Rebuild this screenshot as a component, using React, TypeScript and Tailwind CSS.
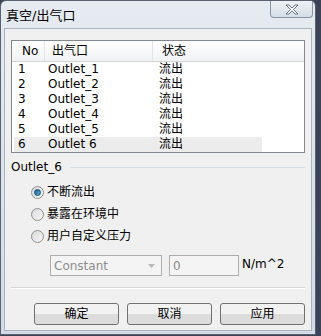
import React from 'react';

const rows = [1, 2, 3, 4, 5, 6].map((n) => ({ no: n, name: `Outlet_${n}`, state: '流出' }));

const font = { fontFamily: '"DejaVu Sans", "Noto Sans CJK SC", sans-serif' };

function Radio({ checked, label }: { checked?: boolean; label: string }) {
  return (
    <div className="flex items-center h-[22px] pl-[20px]">
      <div className="w-[13px] h-[13px] rounded-full border border-[#8e8f8f] bg-gradient-to-br from-[#d9d9d9] to-[#f7f7f7] flex items-center justify-center">
        {checked && (
          <div className="w-[7px] h-[7px] rounded-full bg-gradient-to-br from-[#1c5f8c] to-[#5fb2e0] border border-[#134a70]" />
        )}
      </div>
      <span className="ml-[3px] text-[12px] text-black">{label}</span>
    </div>
  );
}

function Button({ children }: { children: React.ReactNode }) {
  return (
    <button className="w-[86px] h-[22px] rounded-[3px] border border-[#707070] bg-gradient-to-b from-[#f2f2f2] from-50% to-[#dcdcdc] to-50% text-[12px] text-black">
      {children}
    </button>
  );
}

export default function App() {
  return (
    <div className="w-[321px] h-[336px] bg-[#3c4257] overflow-hidden" style={font}>
      <div className="w-[316px] h-[335px] border border-[#5a6270] rounded-t-[6px] bg-gradient-to-b from-[#e6ebf1] to-[#d2dbe6] flex flex-col">
        {/* title bar */}
        <div className="h-[27px] flex items-start justify-between relative">
          <span className="ml-[5px] mt-[5px] text-[13px] text-black">真空/出气口</span>
          <div className="mr-[2px] w-[43px] h-[17px] border border-t-0 border-[#8a96a5] rounded-b-[4px] bg-gradient-to-b from-[#eef2f6] to-[#d5dde7] flex items-center justify-center">
            <svg width="14" height="11" viewBox="0 0 14 11">
              <path d="M1 1 L4 1 L7 4 L10 1 L13 1 L8.5 5.5 L13 10 L10 10 L7 7 L4 10 L1 10 L5.5 5.5 Z" fill="#f4f6f8" stroke="#6d7682" strokeWidth="1" />
            </svg>
          </div>
        </div>

        {/* client */}
        <div className="flex-1 mx-[3px] mb-[3px] bg-[#f0f0f0] border border-[#a9b2bd] px-[6px] pt-[11px]">
          {/* list */}
          <div className="h-[113px] border border-[#828790] bg-white overflow-hidden">
            <div className="h-[21px] flex items-center text-[12px] border-b border-[#d5d5d5] bg-gradient-to-b from-white to-[#f1f2f4]">
              <div className="w-[33px] pl-[10px] border-r border-[#e3e4e6] h-full flex items-center">No</div>
              <div className="w-[108px] pl-[7px] border-r border-[#e3e4e6] h-full flex items-center">出气口</div>
              <div className="flex-1 pl-[9px]">状态</div>
            </div>
            {rows.map((r) => (
              <div
                key={r.no}
                className={`h-[15px] flex items-center text-[12px] leading-[15px] ml-[2px] w-[248px] ${r.no === 6 ? 'bg-[#ececec]' : ''}`}
              >
                <div className="w-[31px] pl-[4px]">{r.no}</div>
                <div className="w-[108px] pl-[3px]">{r.no === 6 ? 'Outlet 6' : r.name}</div>
                <div className="flex-1 pl-[6px]">{r.state}</div>
              </div>
            ))}
          </div>

          {/* group */}
          <div className="mt-[7px] flex items-center h-[14px]">
            <span className="text-[12px] text-black">Outlet_6</span>
            <div className="flex-1 ml-[8px] h-px bg-[#d5dfe5]" />
          </div>
          <div className="mt-[7px] flex flex-col">
            <Radio checked label="不断流出" />
            <Radio label="暴露在环境中" />
            <Radio label="用户自定义压力" />
          </div>

          <div className="mt-[8px] ml-[39px] flex items-center">
            <div className="w-[112px] h-[21px] border border-[#adadad] bg-[#f4f4f4] flex items-center justify-between pl-[3px] pr-[6px]">
              <span className="text-[12px] text-[#8d8d8d]">Constant</span>
              <svg width="7" height="4" viewBox="0 0 7 4">
                <path d="M0 0 L7 0 L3.5 4 Z" fill="#b8b8b8" />
              </svg>
            </div>
            <div className="ml-[7px] w-[70px] h-[21px] border border-[#adadad] bg-[#f4f4f4] flex items-center pl-[3px]">
              <span className="text-[12px] text-[#8d8d8d]">0</span>
            </div>
            <span className="ml-[3px] -mt-[4px] text-[12px] text-black">N/m^2</span>
          </div>

          <div className="mt-[11px] h-px bg-[#d5d5d5] border-b border-white box-content" />

          <div className="mt-[14px] flex gap-[8px] pl-[23px]">
            <Button>确定</Button>
            <Button>取消</Button>
            <Button>应用</Button>
          </div>
        </div>
      </div>
    </div>
  );
}
